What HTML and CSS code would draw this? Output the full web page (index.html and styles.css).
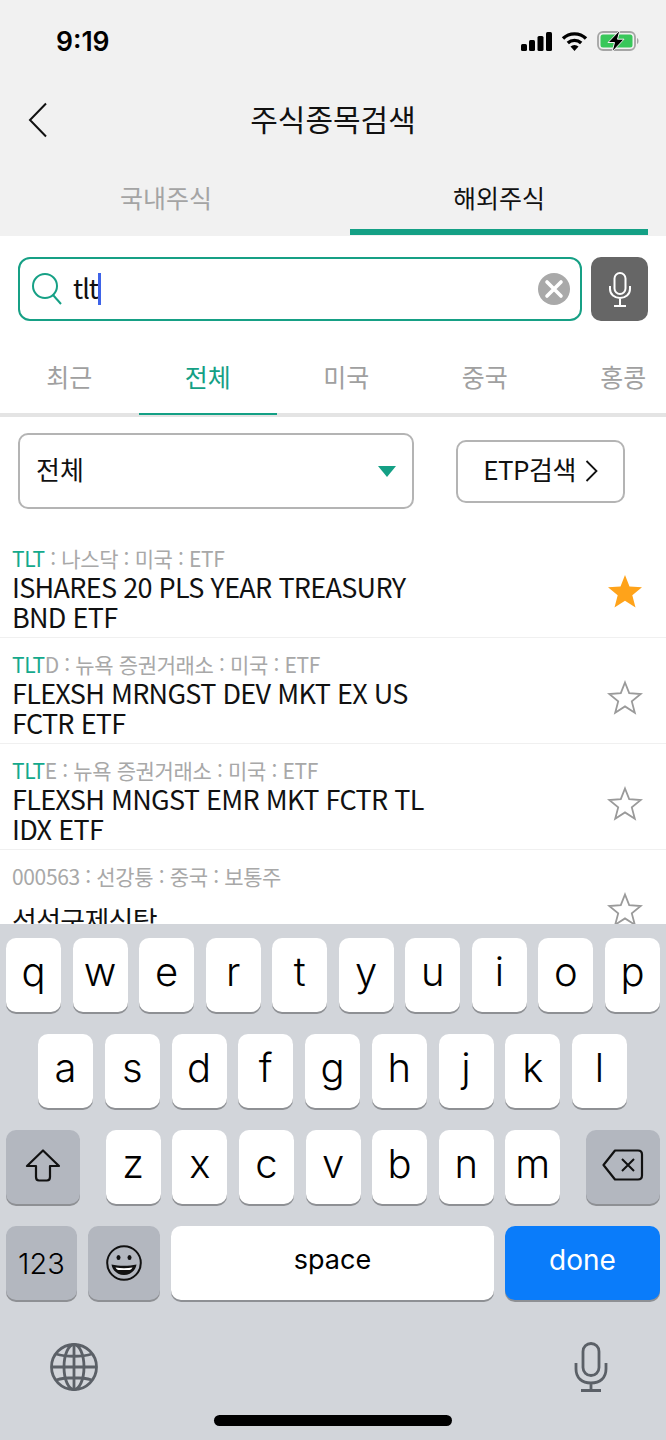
FILE: index.html
```html
<!DOCTYPE html>
<html lang="ko">
<head>
    <meta charset="UTF-8">
    <meta name="viewport" content="width=device-width, initial-scale=1.0">
    <title>주식종목검색</title>
    <link rel="stylesheet" href="styles.css">
</head>
<body>
<div class="screen">

    <div class="top">
        <div class="status">
            <span class="time">9:19</span>
            <div class="status-icons">
                <svg width="31" height="19" viewBox="0 0 31 19"><rect x="0" y="12" width="6" height="7" rx="1.5"/><rect x="8" y="8" width="6" height="11" rx="1.5"/><rect x="16.500" y="4" width="6" height="15" rx="1.5"/><rect x="25" y="0" width="6" height="19" rx="1.5"/></svg>
                <svg width="27" height="20" viewBox="0 0 27 20"><path d="M2 7.500a16.500 16.500 0 0 1 23 0" fill="none" stroke="#000" stroke-width="3.400"/><path d="M6.800 12a10 10 0 0 1 13.400 0" fill="none" stroke="#000" stroke-width="3.400"/><path d="M13.500 20l-4-4.400a5.800 5.800 0 0 1 8 0z"/></svg>
                <svg width="43" height="22" viewBox="0 0 43 22"><rect x="1" y="2" width="37" height="18" rx="5" fill="none" stroke="#a5a5a5" stroke-width="1.800"/><rect x="3.500" y="4.500" width="32" height="13" rx="2.500" fill="#38c75a"/><path d="M40 8c2 .5 2 5.500 0 6z" fill="#a5a5a5"/><path d="M23 0L11 12.500h6.500L15 22l12-12.800h-6.500z" stroke="#f1f1f1" stroke-width="1"/></svg>
            </div>
        </div>
        <div class="nav">
            <svg class="back" width="20" height="36" viewBox="0 0 20 36"><path d="M18 1.500L2 18l16 16.500" fill="none" stroke="#111" stroke-width="2"/></svg>
            <h1>주식종목검색</h1>
        </div>
        <div class="market-tabs">
            <div class="market-tab">국내주식</div>
            <div class="market-tab active">해외주식</div>
        </div>
    </div>

    <div class="search-row">
        <div class="search-box">
            <svg width="32" height="34" viewBox="0 0 32 34"><circle cx="13" cy="14" r="12" fill="none" stroke="#16a085" stroke-width="2"/><path d="M21 23l8 9" fill="none" stroke="#16a085" stroke-width="2"/></svg>
            <span class="search-text">tlt</span><span class="caret"></span>
            <svg class="clear" width="32" height="32" viewBox="0 0 32 32"><circle cx="16" cy="16" r="16" fill="#a9a9a9"/><path d="M9 9l14 14M23 9L9 23" stroke="#fff" stroke-width="3.600" stroke-linecap="round"/></svg>
        </div>
        <div class="voice-btn">
            <svg width="24" height="35" viewBox="0 0 24 35"><rect x="6.500" y="1" width="11" height="21" rx="5.500" fill="none" stroke="#fff" stroke-width="2"/><path d="M2 14v3c0 5.500 4.500 9 10 9s10-3.500 10-9v-3M12 26v8M6 34h12" fill="none" stroke="#fff" stroke-width="2"/></svg>
        </div>
    </div>

    <div class="sub-tabs">
        <div class="sub-tab">최근</div>
        <div class="sub-tab active">전체</div>
        <div class="sub-tab">미국</div>
        <div class="sub-tab">중국</div>
        <div class="sub-tab">홍콩</div>
    </div>

    <div class="filter-row">
        <div class="select">
            <span class="select-text">전체</span>
            <span class="arrow"></span>
        </div>
        <div class="etp-btn">
            <span class="etp-text">ETP검색</span>
            <svg width="13" height="22" viewBox="0 0 13 22"><path d="M1.500 1l10 10-10 10" fill="none" stroke="#111" stroke-width="1.800"/></svg>
        </div>
    </div>

    <div class="list">
        <div class="row">
            <div class="info">
                <div class="meta"><span class="hit">TLT</span> : 나스닥 : 미국 : ETF</div>
                <div class="name"><span>ISHARES 20 PLS YEAR TREASURY<br>BND ETF</span></div>
            </div>
            <svg class="star" width="36" height="36" viewBox="0 0 36 36"><path d="M18 2l4.500 11.500 12.500.8-9.700 8 3.200 12.200L18 27.700 7.500 34.500l3.200-12.200-9.700-8 12.500-.8z" fill="#ffa31a"/></svg>
        </div>
        <div class="row">
            <div class="info">
                <div class="meta"><span class="hit">TLT</span>D : 뉴욕 증권거래소 : 미국 : ETF</div>
                <div class="name"><span>FLEXSH MRNGST DEV MKT EX US<br>FCTR ETF</span></div>
            </div>
            <svg class="star" width="36" height="36" viewBox="0 0 36 36"><path d="M18 3.500l4.200 10.700 11.600.8-9 7.400 3 11.300-9.800-6.300-9.800 6.300 3-11.300-9-7.400 11.600-.8z" fill="none" stroke="#9a9a9a" stroke-width="1.800"/></svg>
        </div>
        <div class="row">
            <div class="info">
                <div class="meta"><span class="hit">TLT</span>E : 뉴욕 증권거래소 : 미국 : ETF</div>
                <div class="name"><span>FLEXSH MNGST EMR MKT FCTR TL<br>IDX ETF</span></div>
            </div>
            <svg class="star" width="36" height="36" viewBox="0 0 36 36"><path d="M18 3.500l4.200 10.700 11.600.8-9 7.400 3 11.300-9.800-6.300-9.800 6.300 3-11.300-9-7.400 11.600-.8z" fill="none" stroke="#9a9a9a" stroke-width="1.800"/></svg>
        </div>
        <div class="row">
            <div class="info">
                <div class="meta">000563 : 선강퉁 : 중국 : 보통주</div>
                <div class="name"><span>선선구제신탁</span></div>
            </div>
            <svg class="star" width="36" height="36" viewBox="0 0 36 36"><path d="M18 3.500l4.200 10.700 11.600.8-9 7.400 3 11.300-9.800-6.300-9.800 6.300 3-11.300-9-7.400 11.600-.8z" fill="none" stroke="#9a9a9a" stroke-width="1.800"/></svg>
        </div>
    </div>

    <div class="keyboard">
        <div class="key-row">
            <div class="key">q</div><div class="key">w</div><div class="key">e</div><div class="key">r</div><div class="key">t</div><div class="key">y</div><div class="key">u</div><div class="key">i</div><div class="key">o</div><div class="key">p</div>
        </div>
        <div class="key-row inset">
            <div class="key">a</div><div class="key">s</div><div class="key">d</div><div class="key">f</div><div class="key">g</div><div class="key">h</div><div class="key">j</div><div class="key">k</div><div class="key">l</div>
        </div>
        <div class="key-row">
            <div class="key dark wide">
                <svg width="36" height="33" viewBox="0 0 36 33"><path d="M18 1.500L2 17h9v11c0 2 1 3.500 3 3.500h8c2 0 3-1.500 3-3.500V17h9z" fill="none" stroke="#111" stroke-width="2.200" stroke-linejoin="round"/></svg>
            </div>
            <div class="letters">
                <div class="key">z</div><div class="key">x</div><div class="key">c</div><div class="key">v</div><div class="key">b</div><div class="key">n</div><div class="key">m</div>
            </div>
            <div class="key dark wide">
                <svg width="42" height="32" viewBox="0 0 42 32"><path d="M13 1.500h23c2.500 0 4 1.500 4 4v21c0 2.500-1.500 4-4 4H13L1.500 16z" fill="none" stroke="#111" stroke-width="2.200" stroke-linejoin="round"/><path d="M20 10l12 12M32 10L20 22" stroke="#111" stroke-width="2"/></svg>
            </div>
        </div>
        <div class="key-row bottom-row">
            <div class="key dark num">123</div>
            <div class="key dark emoji">
                <svg width="36" height="36" viewBox="0 0 36 36"><circle cx="18" cy="18" r="16.800" fill="none" stroke="#111" stroke-width="2"/><ellipse cx="12.500" cy="12.500" rx="2" ry="2.500" fill="#111"/><ellipse cx="23.500" cy="12.500" rx="2" ry="2.500" fill="#111"/><path d="M5.500 19.500c7.500 1.800 17.500 1.800 25 0-1 6.500-6.500 10.500-12.500 10.500S6.500 26 5.500 19.500z" fill="#111"/><path d="M9.500 22.500c5.500 1 11.500 1 17 0-.8 1.600-1.800 2.500-3 2.500h-11c-1.200 0-2.200-.9-3-2.500z" fill="#fff"/></svg>
            </div>
            <div class="key space">space</div>
            <div class="key done">done</div>
        </div>
        <div class="key-extra">
            <svg width="48" height="48" viewBox="0 0 48 48"><g fill="none" stroke="#5b6067" stroke-width="2.800"><circle cx="24" cy="24" r="22.500"/><ellipse cx="24" cy="24" rx="10" ry="22.500"/><path d="M24 1.500v45M1.500 24h45M6 11c10 3 26 3 36 0M6 37c10-3 26-3 36 0"/></g></svg>
            <svg width="34" height="50" viewBox="0 0 34 50"><g fill="none" stroke="#5b6067" stroke-width="2.800"><rect x="9" y="1.500" width="16" height="32" rx="8"/><path d="M2 21v6c0 9 6 14 15 14s15-5 15-14v-6M17 41v8M7 48.500h20"/></g></svg>
        </div>
        <div class="home-bar"></div>
    </div>

</div>
</body>
</html>
```

FILE: styles.css
```css
* {
    margin: 0;
    padding: 0;
    box-sizing: border-box;
    font-family: "Noto Sans CJK KR", "Noto Sans", sans-serif;
}

body {
    background: #fff;
    color: #111;
}

.screen {
    width: 666px;
    height: 1440px;
    display: flex;
    flex-direction: column;
    overflow: hidden;
}

/* top gray area */
.top {
    background: #f1f1f1;
    height: 236px;
    flex-shrink: 0;
}

.status {
    height: 82px;
    padding: 0 26px 0 56px;
    display: flex;
    justify-content: space-between;
    align-items: center;
}

.time {
    font-family: Inter, "Liberation Sans", sans-serif;
    font-size: 26.500px;
    font-weight: 600;
    color: #000;
}

.status-icons {
    display: flex;
    align-items: center;
    gap: 9px;
}

.nav {
    height: 74px;
    display: flex;
    align-items: center;
    justify-content: center;
    position: relative;
}

.back {
    position: absolute;
    left: 28px;
    top: 20px;
}

h1 {
    font-size: 30px;
    font-weight: 400;
    margin-bottom: 2px;
}

.market-tabs {
    display: flex;
    gap: 36px;
    padding: 0 18px;
    height: 80px;
}

.market-tab {
    width: 296px;
    height: 79px;
    line-height: 82px;
    text-align: center;
    font-size: 25px;
    color: #a4a4a4;
}

.market-tab.active {
    width: 298px;
    color: #111;
    border-bottom: 6px solid #14a085;
}

/* search */
.search-row {
    display: flex;
    gap: 9px;
    padding: 21px 18px 0;
    height: 85px;
    flex-shrink: 0;
}

.search-box {
    flex: 1;
    height: 64px;
    border: 2px solid #16a085;
    border-radius: 12px;
    display: flex;
    align-items: center;
    padding: 0 10px 0 12px;
}

.search-text {
    font-size: 27px;
    margin-left: 9px;
    margin-bottom: 3px;
    letter-spacing: -1px;
}

.caret {
    width: 3px;
    height: 32px;
    background: #3e63e8;
}

.clear {
    margin-left: auto;
}

.voice-btn {
    width: 57px;
    height: 64px;
    background: #666;
    border-radius: 10px;
    display: flex;
    align-items: center;
    justify-content: center;
}

/* market sub tabs */
.sub-tabs {
    display: flex;
    height: 96px;
    padding-top: 16px;
    border-bottom: 4px solid #e4e4e4;
    flex-shrink: 0;
}

.sub-tab {
    flex: 0 0 138.500px;
    height: 78px;
    line-height: 78px;
    text-align: center;
    font-size: 25px;
    color: #a0a0a0;
    margin-bottom: -2px;
}

.sub-tab.active {
    color: #14a085;
    border-bottom: 2px solid #14a085;
}

/* filter */
.filter-row {
    display: flex;
    align-items: center;
    padding: 2px 0 0 18px;
    height: 106px;
    flex-shrink: 0;
}

.select {
    width: 396px;
    height: 76px;
    border: 2px solid #b4b4b4;
    border-radius: 10px;
    display: flex;
    align-items: center;
    justify-content: space-between;
    padding: 0 16px;
    font-size: 26px;
}

.select-text,
.etp-text {
    margin-bottom: 6px;
}

.arrow {
    width: 0;
    height: 0;
    border-left: 9px solid transparent;
    border-right: 9px solid transparent;
    border-top: 11px solid #14a085;
}

.etp-btn {
    width: 169px;
    height: 63px;
    margin-left: 42px;
    border: 2px solid #b4b4b4;
    border-radius: 10px;
    display: flex;
    align-items: center;
    justify-content: center;
    gap: 9px;
    font-size: 26px;
    letter-spacing: -0.5px;
}

/* result list */
.list {
    flex: 1;
    overflow: hidden;
    min-height: 0;
    padding-top: 9px;
}

.row {
    height: 106px;
    padding: 6px 23px 0 12px;
    display: flex;
    justify-content: space-between;
    align-items: center;
    border-bottom: 1px solid #f0f0f0;
}

.meta {
    font-size: 21px;
    line-height: 28px;
    letter-spacing: -0.36px;
    color: #a8a8a8;
}

.hit {
    color: #14a98c;
}

.name {
    font-size: 27px;
    line-height: 30px;
    min-height: 60px;
    display: flex;
    align-items: center;
    letter-spacing: -0.7px;
}

.star {
    flex-shrink: 0;
    margin-top: 6px;
}

/* keyboard */
.keyboard {
    height: 516px;
    flex-shrink: 0;
    background: #d2d5da;
    padding: 14px 6px 0;
    display: flex;
    flex-direction: column;
    gap: 22px;
    position: relative;
}

.key-row {
    display: flex;
    justify-content: space-between;
    height: 74px;
    flex-shrink: 0;
}

.key-row.inset {
    padding: 0 33px 0 32px;
}

.key {
    width: 55px;
    height: 74px;
    background: #fff;
    border-radius: 10px;
    box-shadow: 0 2px 0 #8e9094;
    display: flex;
    align-items: center;
    justify-content: center;
    font-family: Inter, "Liberation Sans", sans-serif;
    font-weight: 300;
    font-size: 40px;
    color: #000;
    padding-bottom: 7px;
}

.key.dark {
    background: #b3b7bf;
}

.key.wide {
    width: 74px;
    padding-bottom: 4px;
}

.letters {
    display: flex;
    gap: 11.600px;
}

.bottom-row {
    justify-content: flex-start;
    gap: 11px;
}

.key.num {
    width: 71px;
    font-size: 29px;
    padding-bottom: 0;
}

.key.emoji {
    width: 72px;
    padding-bottom: 0;
}

.key.space {
    width: 323px;
    font-size: 27px;
    font-weight: 400;
}

.key.done {
    width: 155px;
    background: #0a7cfa;
    color: #fff;
    font-size: 28px;
    font-weight: 400;
}

.key-extra {
    display: flex;
    justify-content: space-between;
    align-items: center;
    padding: 0 52px 0 44px;
    margin-top: 20px;
}

.home-bar {
    position: absolute;
    left: 214px;
    bottom: 14px;
    width: 238px;
    height: 11px;
    background: #000;
    border-radius: 6px;
}
```
